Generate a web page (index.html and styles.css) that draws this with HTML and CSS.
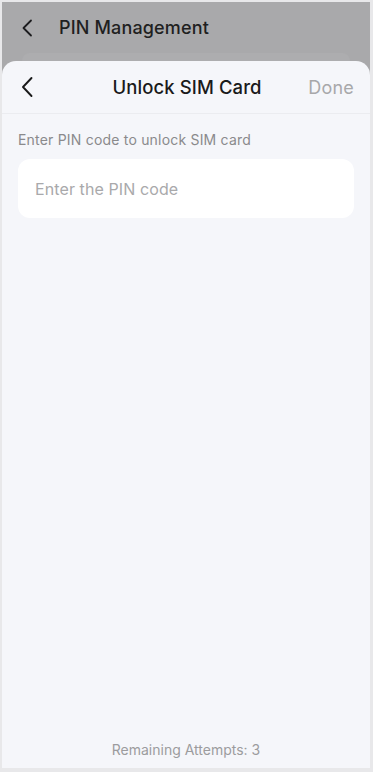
FILE: index.html
```html
<!DOCTYPE html>
<html>
<head>
<meta charset="utf-8">
<link rel="stylesheet" href="styles.css">
</head>
<body>
<div class="frame">
  <div class="topbar">
    <svg class="chev-top" width="12" height="18" viewBox="0 0 12 18"><path d="M10 1.5 L2.5 9 L10 16.5" fill="none" stroke="#1c1c1e" stroke-width="1.8" stroke-linecap="round" stroke-linejoin="round"/></svg>
    <span class="top-title">PIN Management</span>
  </div>
  <div class="peek"></div>
  <div class="sheet">
    <div class="sheet-head">
      <svg class="chev" width="14" height="22" viewBox="0 0 14 22"><path d="M11.5 2 L3 11 L11.5 20" fill="none" stroke="#1a1a1a" stroke-width="1.9" stroke-linecap="round" stroke-linejoin="round"/></svg>
      <span class="sheet-title">Unlock SIM Card</span>
      <span class="done">Done</span>
    </div>
    <div class="content">
      <div class="label">Enter PIN code to unlock SIM card</div>
      <div class="input">Enter the PIN code</div>
    </div>
    <div class="remaining">Remaining Attempts: 3</div>
  </div>
</div>
</body>
</html>
```
FILE: styles.css
```css
* { box-sizing: border-box; }
html, body { margin: 0; padding: 0; }
body {
  font-family: "Inter", "Noto Sans", sans-serif;
  background: #e8e8e8;
}
.frame {
  width: 373px;
  height: 772px;
  border-style: solid;
  border-color: #e8e8ea;
  border-width: 2px 3px 4px 2px;
  background: #a9a9ab;
  display: flex;
  flex-direction: column;
}
.topbar {
  height: 51px;
  display: flex;
  align-items: center;
  padding-left: 19px;
  flex-shrink: 0;
}
.chev-top { margin-right: 26px; }
.top-title {
  font-size: 18px;
  font-weight: 500;
  color: #1f1f21;
  letter-spacing: 0.15px;
}
.peek {
  height: 8px;
  margin: 0 20px;
  border-radius: 12px 12px 0 0;
  background: #adadaf;
  flex-shrink: 0;
}
.sheet {
  flex: 1;
  background: #f5f6fa;
  border-radius: 14px 14px 0 0;
  display: flex;
  flex-direction: column;
}
.sheet-head {
  height: 53px;
  border-bottom: 1px solid #ebecf0;
  display: grid;
  grid-template-columns: 1fr auto 1fr;
  align-items: center;
  padding: 0 16px 0 18px;
  flex-shrink: 0;
}
.chev { justify-self: start; }
.sheet-title {
  font-size: 18.5px;
  font-weight: 500;
  color: #1a1a1a;
  letter-spacing: 0.1px;
}
.done {
  justify-self: end;
  font-size: 18px;
  color: #a8a8aa;
  letter-spacing: 0.2px;
}
.content {
  flex: 1;
  padding: 16px 16px 0 16px;
}
.label {
  font-size: 14px;
  line-height: 20px;
  color: #8a8a8c;
  letter-spacing: 0.2px;
  margin-bottom: 9px;
}
.input {
  height: 59px;
  background: #ffffff;
  border-radius: 12px;
  padding-left: 17px;
  display: flex;
  align-items: center;
  font-size: 16px;
  color: #a9a9ab;
  letter-spacing: 0.1px;
}
.remaining {
  text-align: center;
  font-size: 14px;
  color: #9c9c9e;
  padding-bottom: 8px;
  line-height: 20px;
}
```
